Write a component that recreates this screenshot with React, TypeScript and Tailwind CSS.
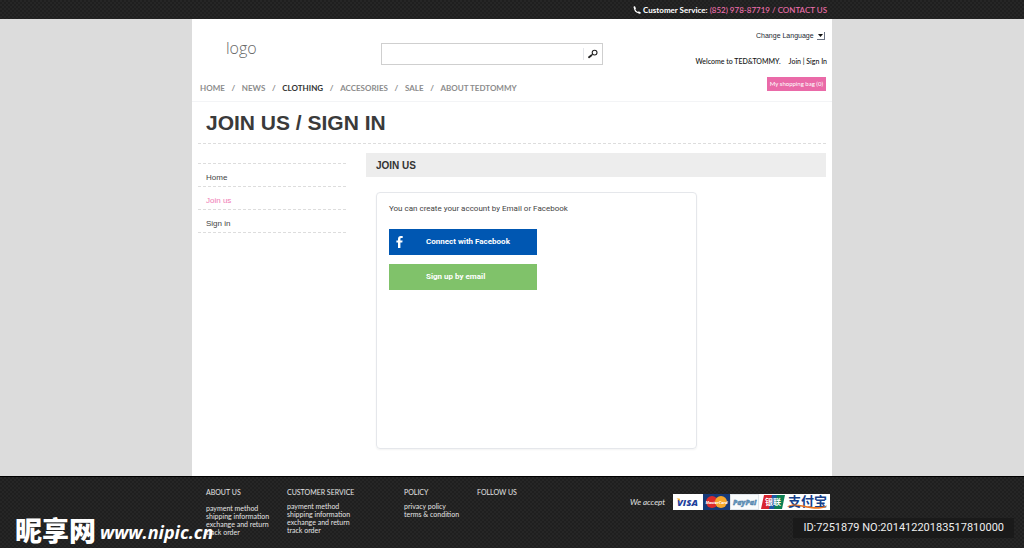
import React, { useState } from 'react';

interface FooterColumn {
  title: string;
  width: string;
  listGap: string;
  links: string[];
}

const NAV_ITEMS = ['HOME', 'NEWS', 'CLOTHING', 'ACCESORIES', 'SALE', 'ABOUT TEDTOMMY'];

const SIDE_LINKS = ['Home', 'Join us', 'Sign in'];

const FOOTER_COLUMNS: FooterColumn[] = [
  {
    title: 'ABOUT US',
    width: 'w-[81px]',
    listGap: 'mt-[7px]',
    links: ['payment method', 'shipping information', 'exchange and return', 'track order'],
  },
  {
    title: 'CUSTOMER SERVICE',
    width: 'w-[117px]',
    listGap: 'mt-[5px]',
    links: ['payment method', 'shipping information', 'exchange and return', 'track order'],
  },
  {
    title: 'POLICY',
    width: 'w-[73px]',
    listGap: 'mt-[5px]',
    links: ['privacy policy', 'terms & condition'],
  },
  { title: 'FOLLOW US', width: 'w-[60px]', listGap: 'mt-[5px]', links: [] },
];

const TEXTURE =
  'bg-[#222222] bg-[repeating-conic-gradient(#1f1f1f_0%_25%,#262626_0%_50%)] bg-[length:4px_4px]';

const TopBar: React.FC = () => (
  <div className={`h-[19px] ${TEXTURE}`}>
    <div className="mx-auto flex h-full max-w-[640px] items-center justify-end pr-[5px] font-['Lato',sans-serif] text-[8px]">
      <svg viewBox="0 0 8 8" className="mr-0.5 size-2" fill="none" stroke="#fff" strokeLinecap="round">
        <path d="M1.4 1.6C1.6 4 3.6 6.4 6.2 6.8" strokeWidth="1.1" />
        <path d="M1.5 1.2 1.9 2.3M5.6 6.4 6.8 6.9" strokeWidth="1.8" />
      </svg>
      <span className="mr-0.5 font-bold text-white">Customer Service:</span>
      <a href="#contact" className="font-medium text-[#f070ae]">(852) 978-87719 / CONTACT US</a>
    </div>
  </div>
);

const SearchBox: React.FC = () => {
  const [query, setQuery] = useState('');

  return (
    <form className="flex h-[22px] w-[222px] border border-[#cfcfcf] bg-white" onSubmit={(e) => e.preventDefault()}>
      <input
        type="text"
        aria-label="Search"
        className="min-w-0 flex-1 px-2 text-[9px] outline-none"
        value={query}
        onChange={(e) => setQuery(e.target.value)}
      />
      <button type="submit" aria-label="Search" className="my-1 flex w-[19px] items-center justify-center border-l border-gray-200">
        <svg viewBox="0 0 10 10" className="size-2.5" fill="none" stroke="#222">
          <circle cx="6.6" cy="3.6" r="2.4" strokeWidth="1.1" />
          <path d="M4.7 5.3 3.4 6.3" strokeWidth="1" />
          <path d="M3.5 6.3 1 8.3" strokeWidth="1.8" strokeLinecap="round" />
        </svg>
      </button>
    </form>
  );
};

const Header: React.FC = () => (
  <header className="flex h-[83px] flex-col justify-between border-b border-gray-100">
    <div className="flex pr-[5px]">
      <a href="#home" className="mt-[18px] ml-[34px] w-[155px] font-['Open_Sans',sans-serif] text-[16px] leading-[22px] font-light text-[#666]">
        logo
      </a>
      <div className="mt-6">
        <SearchBox />
      </div>
      <div className="flex flex-1 flex-col items-end font-['Lato',sans-serif]">
        <div className="relative mt-[11px] mr-0.5 flex items-center">
          <select
            aria-label="Change language"
            className="h-[11px] w-[69px] appearance-none font-['Liberation_Sans',sans-serif] text-[7px] leading-[11px] text-[#1a1f33]"
          >
            <option>Change Language</option>
          </select>
          <span className="pointer-events-none absolute right-0 flex h-2 w-2 items-center justify-center border-r border-b border-gray-500">
            <svg viewBox="0 0 5 3" className="h-[3px] w-[5px]">
              <path d="M0 0h5L2.5 3z" fill="#111" />
            </svg>
          </span>
        </div>
        <div className="mt-[15px] flex gap-2 text-[7px] leading-[10px] font-medium text-[#111]">
          <span>Welcome to TED&amp;TOMMY.</span>
          <span>
            <a href="#join">Join</a> | <a href="#signin">Sign In</a>
          </span>
        </div>
      </div>
    </div>
    <div className="flex items-start justify-between pr-1.5 pl-2">
      <nav className="flex pt-1 pb-1.5 font-['Lato',sans-serif] text-[8px] leading-[14px] font-bold text-[#8c8c8c]">
        {NAV_ITEMS.map((item, i) => (
          <React.Fragment key={item}>
            {i > 0 && <span className="w-[17px] text-center">/</span>}
            <a href="#shop" className={item === 'CLOTHING' ? 'text-[#333]' : ''}>{item}</a>
          </React.Fragment>
        ))}
      </nav>
      <a href="#bag" className="bg-[#ea6aa8] px-[3px] font-['Lato',sans-serif] text-[6px] leading-[14px] text-white">
        My shopping bag (0)
      </a>
    </div>
  </header>
);

const Sidebar: React.FC = () => (
  <aside className="mt-2.5 ml-1.5 w-[148px] self-start border-t border-dashed border-[#ddd]">
    {SIDE_LINKS.map((link) => (
      <a
        key={link}
        href="#account"
        className={`block h-[23px] border-b border-dashed border-[#ddd] pt-[9px] pl-2 text-[8px] leading-[10px] ${
          link === 'Join us' ? 'text-[#f07ab4]' : 'text-[#444]'
        }`}
      >
        {link}
      </a>
    ))}
  </aside>
);

const JoinPanel: React.FC = () => (
  <section className="ml-5 flex-1">
    <h2 className="bg-[#ededed] pt-0.5 pl-2.5 text-[10px] leading-[22px] font-bold text-[#333]">JOIN US</h2>
    <div className="mt-[15px] ml-2.5 min-h-[257px] max-w-[321px] rounded-sm border border-gray-200 px-3 pt-[11px] pb-3 font-['Roboto',sans-serif] shadow-xs">
      <p className="text-[8px] leading-[10px] text-[#444]">You can create your account by Email or Facebook</p>
      <button className="mt-[15px] flex h-[26px] w-[148px] items-center bg-[#0057b2] pl-[7px] text-[8px] font-bold text-white">
        <svg viewBox="0 0 7 12" className="mr-[23px] h-3 w-[7px]" fill="#fff">
          <path d="M2 12V6.6H.4V4.5H2V3C2 1 3.1 0 4.8 0H6.7V2.1H5.5C4.7 2.1 4.4 2.5 4.4 3.1V4.5H6.6L6.3 6.6H4.4V12z" />
        </svg>
        Connect with Facebook
      </button>
      <button className="mt-[9px] flex h-[26px] w-[148px] items-center bg-[#80c26a] pl-[37px] text-[8px] font-bold text-white">
        Sign up by email
      </button>
    </div>
  </section>
);

const PaymentCards: React.FC = () => (
  <svg viewBox="0 0 157 16" className="h-4 w-[157px] overflow-visible not-italic" role="img" aria-label="Accepted payment methods">
    <rect width="157" height="16" fill="#fff" />
    {/* Visa */}
    <text x="4" y="11.5" fontFamily="Open Sans, sans-serif" fontSize="9.5" fontWeight="800" fontStyle="italic" fill="#1e3f9c">VISA</text>
    <path d="M3.5 4.500h3l1 3z" fill="#f0a92c" />
    {/* MasterCard */}
    <rect x="30" width="27" height="16" fill="#173a78" />
    <circle cx="39" cy="8" r="6" fill="#dc2b2b" />
    <circle cx="48" cy="8" r="6" fill="#f6a72b" />
    <text x="43.5" y="10" textAnchor="middle" fontFamily="Open Sans, sans-serif" fontSize="4" fontWeight="700" fontStyle="italic" fill="#fff">MasterCard</text>
    {/* PayPal */}
    <rect x="57.5" y=".5" width="28" height="15" fill="#f9fbfc" stroke="#dfe5ea" />
    <text x="60" y="11" fontFamily="Open Sans, sans-serif" fontSize="7" fontWeight="800" fontStyle="italic" fill="#6d9fc4" stroke="#2c618f" strokeWidth=".3">PayPal</text>
    {/* UnionPay */}
    <path d="M91 1h9l-3 14h-9z" fill="#d8242f" />
    <path d="M99 1h7l-3 14h-7z" fill="#1d5aa6" />
    <path d="M104 1h8l-3 14h-8z" fill="#0d7f52" />
    <text x="92" y="11" fontFamily="Noto Sans CJK SC, sans-serif" fontSize="8" fontWeight="700" fill="#fff">银联</text>
    {/* Alipay */}
    <text x="115" y="12" fontFamily="Noto Sans CJK SC, sans-serif" fontSize="13" fontWeight="700" fill="#173f8a">支付宝</text>
    <path d="M114.5 12.4C119 8 131 12 141 13c6 .4 10-.2 13-1.8-2 3.4-8 4-15 3.2-9-1-18-4.5-22.5-2.2-1.2 1-2.5 1-2 .2z" fill="#ee7420" />
  </svg>
);

const Footer: React.FC = () => (
  <footer className={`relative min-h-[72px] overflow-hidden border-t border-black ${TEXTURE}`}>
    <div className="mx-auto flex max-w-[640px] pt-2.5 pl-3.5 font-['Lato',sans-serif] text-[7px] leading-[8px] text-[#e4e4e4]">
      {FOOTER_COLUMNS.map((col) => (
        <div key={col.title} className={`shrink-0 ${col.width}`}>
          <h3 className="leading-[10px] whitespace-nowrap">{col.title}</h3>
          <ul className={col.listGap}>
            {col.links.map((link) => (
              <li key={link} className="whitespace-nowrap">
                <a href="#info">{link}</a>
              </li>
            ))}
          </ul>
        </div>
      ))}
      <div className="mt-[7px] mr-0.5 ml-auto flex h-4 items-center gap-2 text-[8px] italic">
        <span>We accept</span>
        <PaymentCards />
      </div>
    </div>

    {/* Site stamps over the footer */}
    <div className="absolute bottom-0.5 left-[15px] flex items-center gap-1 text-white">
      <span className="font-['Noto_Sans_CJK_SC',sans-serif] text-[27px] leading-8 font-black">昵享网</span>
      <span className="pt-1 font-['Open_Sans',sans-serif] text-[18px] leading-6 font-bold italic">www.nipic.cn</span>
    </div>
    <div className="absolute right-2.5 bottom-2.5 bg-[#1a1a1a] px-2.5 font-['Roboto',sans-serif] text-[11px] leading-5 text-[#eee]">
      ID:7251879 NO:20141220183517810000
    </div>
  </footer>
);

const App: React.FC = () => {
  return (
    <div className="flex min-h-screen flex-col bg-[#dcdcdc] font-['Liberation_Sans',Arial,sans-serif]">
      <TopBar />
      <main className="mx-auto w-full max-w-[640px] flex-1 bg-white">
        <Header />
        <div className="mx-1.5 border-b border-dashed border-[#ddd]">
          <h1 className="py-2 pl-2 text-[21px] leading-[25px] font-bold text-[#3a3a3a]">JOIN US / SIGN IN</h1>
        </div>
        <div className="flex pt-[9px] pr-1.5">
          <Sidebar />
          <JoinPanel />
        </div>
      </main>
      <Footer />
    </div>
  );
};

export default App;
